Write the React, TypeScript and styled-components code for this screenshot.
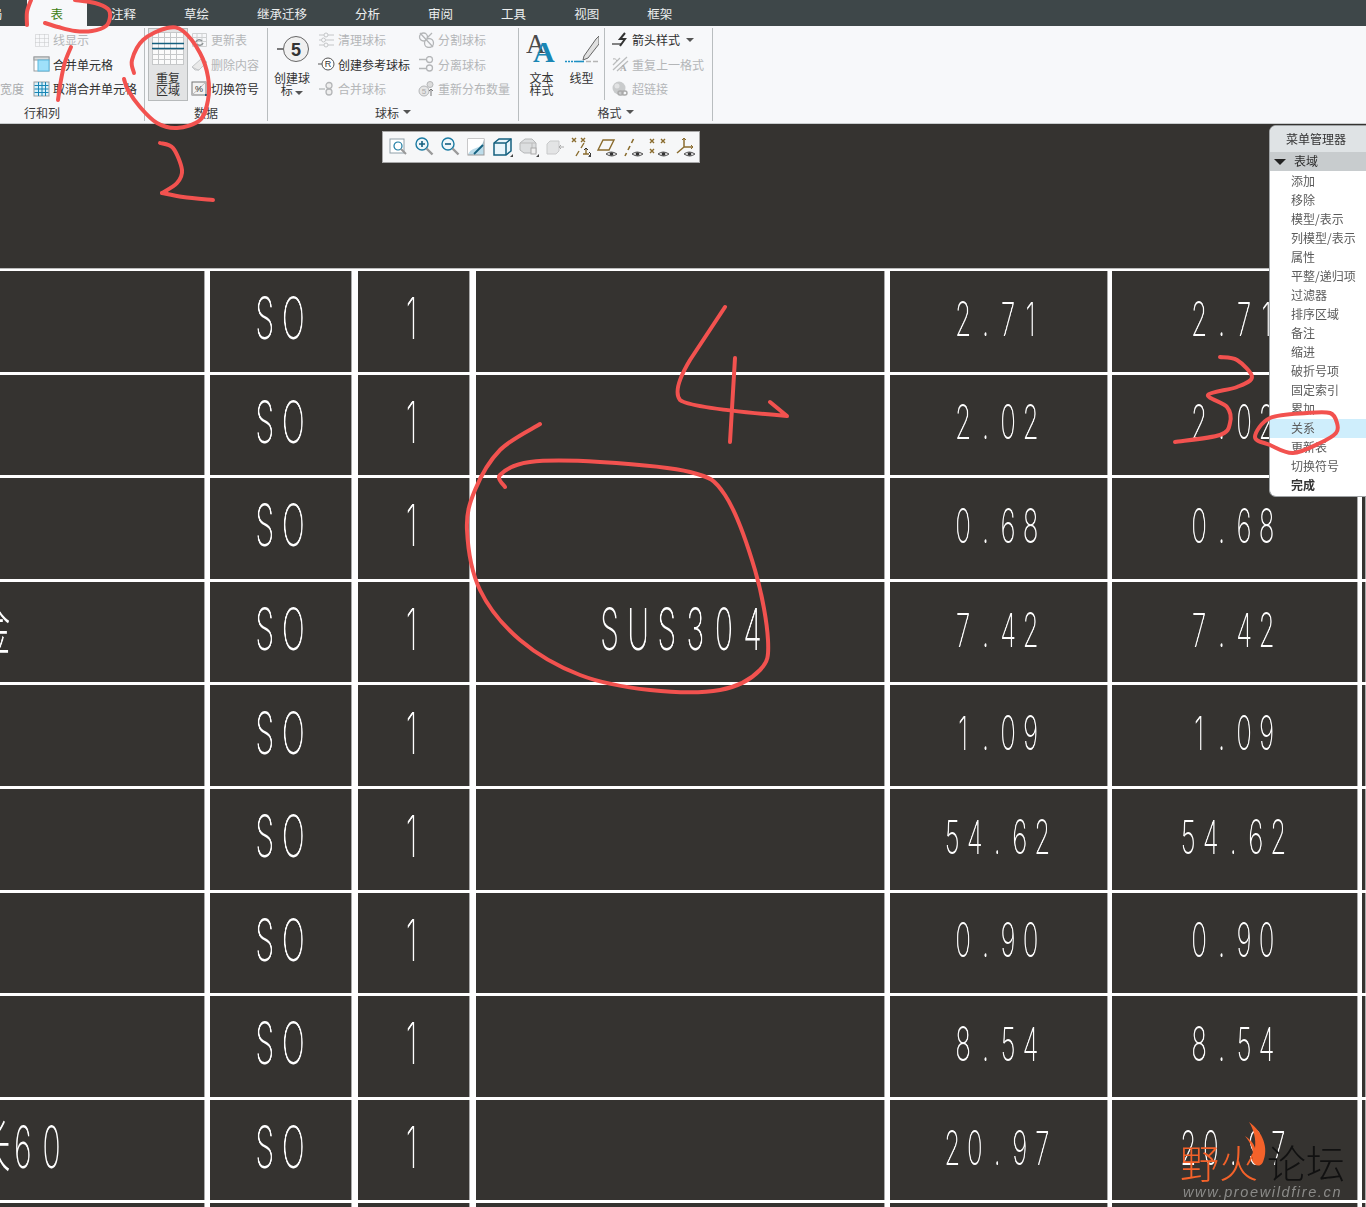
import React from "react";
import styled, { createGlobalStyle } from "styled-components";

const Global = createGlobalStyle`
  html, body { margin: 0; padding: 0; height: 1207px; overflow: hidden; background: #353330; }
  body { font-family: "Noto Sans CJK SC", "Liberation Sans", sans-serif; }
`;

const Page = styled.div`
  position: relative;
  width: 1366px;
  height: 1207px;
  overflow: hidden;
  background: #353330;
`;

/* ---------- tab bar ---------- */
const TabBar = styled.div`
  display: flex;
  height: 26px;
  background: #3e4749;
`;
const Tab = styled.div<{ $active?: boolean; $first?: boolean }>`
  padding: 0 24px;
  margin-left: ${(p) => (p.$first ? "-34px" : "0")};
  font-size: 12.5px;
  line-height: 28px;
  white-space: nowrap;
  color: ${(p) => (p.$active ? "#3c7d12" : "#eceeee")};
  background: ${(p) => (p.$active ? "#f7f8fa" : "transparent")};
`;

/* ---------- ribbon ---------- */
const Ribbon = styled.div`
  display: flex;
  height: 98px;
  padding-top: 1.5px;
  box-sizing: border-box;
  background: #f7f8fa;
  border-bottom: 1px solid #c9cccd;
`;
const Group = styled.div<{ $width: number }>`
  display: flex;
  flex-direction: column;
  width: ${(p) => p.$width}px;
  height: 93px;
  box-sizing: border-box;
  border-right: 1px solid #b9bdbf;
  flex: none;
`;
const GroupBody = styled.div<{ $pad: number }>`
  display: flex;
  height: 74px;
  padding-left: ${(p) => p.$pad}px;
`;
const GroupLabel = styled.div<{ $inset?: number }>`
  display: flex;
  justify-content: center;
  align-items: center;
  gap: 4px;
  padding-right: ${(p) => p.$inset ?? 0}px;
  padding-top: 3px;
  font-size: 12px;
  line-height: 15px;
  color: #3a3a3a;
`;
const Caret = styled.span`
  display: inline-block;
  width: 0;
  height: 0;
  border-left: 4px solid transparent;
  border-right: 4px solid transparent;
  border-top: 4px solid #555;
`;
const Column = styled.div<{ $left?: number }>`
  display: flex;
  flex-direction: column;
  margin-left: ${(p) => p.$left ?? 0}px;
`;
const RowItem = styled.div<{ $off?: boolean }>`
  display: flex;
  align-items: center;
  gap: 3px;
  height: 24.5px;
  font-size: 12px;
  white-space: nowrap;
  color: ${(p) => (p.$off ? "#b4b6b8" : "#2e2e2e")};
  svg { flex: none; }
`;
const ClippedLabel = styled.div`
  display: flex;
  align-items: center;
  height: 24.5px;
  margin-top: 49px;
  width: 33px;
  font-size: 12px;
  color: #a9abad;
`;
const LargeButton = styled.div<{ $width: number; $selected?: boolean; $left?: number }>`
  display: flex;
  flex-direction: column;
  align-items: center;
  box-sizing: border-box;
  width: ${(p) => p.$width}px;
  height: 73px;
  margin-left: ${(p) => p.$left ?? 0}px;
  font-size: 12px;
  line-height: 12px;
  text-align: center;
  color: #333;
  background: ${(p) => (p.$selected ? "#e2e3e4" : "transparent")};
  border: 1px solid ${(p) => (p.$selected ? "#b7babb" : "transparent")};
`;
const LargeIcon = styled.div`
  display: flex;
  align-items: center;
  justify-content: center;
  height: 40px;
  margin-bottom: 3px;
  flex: none;
`;
const InnerRule = styled.div`
  width: 1px;
  height: 72px;
  margin: 0 7px 0 4px;
  background: #b9bdbf;
`;

/* ---------- floating view toolbar ---------- */
const ViewToolbar = styled.div`
  position: absolute;
  left: 382px;
  top: 131px;
  display: flex;
  align-items: center;
  box-sizing: border-box;
  width: 318px;
  height: 32px;
  padding-left: 3px;
  background: #f6f7f8;
  border: 1px solid #a8a8a8;
`;
const ToolCell = styled.div`
  display: flex;
  justify-content: center;
  width: 26px;
  flex: none;
`;

/* ---------- table ---------- */
const Table = styled.div`
  display: grid;
  grid-template-columns: 210px 148px 118px 414px 222px 250px 1fr;
  grid-auto-rows: 100.6px;
  row-gap: 3px;
  margin-top: 144px;
  padding-top: 3px;
  background: #fff;
  box-shadow: inset 0 1px 0 #bbb;
`;
const Cell = styled.div<{ $line: number; $left?: boolean; $nudge?: number }>`
  display: flex;
  align-items: center;
  justify-content: ${(p) => (p.$left ? "flex-start" : "center")};
  min-width: 0;
  padding-bottom: 6px;
  padding-right: ${(p) => p.$nudge ?? 0}px;
  box-sizing: border-box;
  overflow: ${(p) => (p.$left ? "hidden" : "visible")};
  background: #353330;
  border-right: ${(p) => p.$line}px solid #fff;
  box-shadow: inset -1px 0 0 #a9a9a9;
`;
const CadLine = styled.span<{ $clip?: boolean; $size: number; $scale: number }>`
  display: inline-flex;
  flex: none;
  margin-left: ${(p) => (p.$clip ? "-20px" : "0")};
  font-family: Inter, "Noto Sans CJK SC", sans-serif;
  font-weight: 200;
  font-size: ${(p) => p.$size}px;
  line-height: ${(p) => p.$size}px;
  white-space: nowrap;
  color: #fff;
  will-change: transform;
  transform: scaleX(${(p) => p.$scale});
  transform-origin: ${(p) => (p.$clip ? "left center" : "center")};
`;
const Glyph = styled.span<{ $w: number }>`
  display: inline-block;
  flex: none;
  width: ${(p) => p.$w}px;
  text-align: center;
`;
const CadText = ({ text, small, clip }: { text: string; small?: boolean; clip?: boolean }) => {
  const size = small ? 47 : 58;
  const scale = small ? 0.55 : 0.52;
  const pitch = small ? 22.5 : 28.6;
  return (
    <CadLine $size={size} $scale={scale} $clip={clip}>
      {Array.from(text).map((c, i) => <Glyph key={i} $w={pitch / scale}>{c}</Glyph>)}
    </CadLine>
  );
};

/* ---------- menu manager ---------- */
const MenuPanel = styled.div`
  position: absolute;
  left: 1269px;
  top: 125px;
  width: 97px;
  height: 372px;
  box-sizing: border-box;
  overflow: hidden;
  background: #fff;
  border: 1px solid #9fa3a5;
  border-right: none;
  border-radius: 7px 0 0 7px;
`;
const MenuHeader = styled.div`
  height: 26px;
  padding-left: 16px;
  font-size: 12px;
  line-height: 25px;
  color: #333;
  background: #dfe3e5;
`;
const MenuSection = styled.div`
  display: flex;
  align-items: center;
  gap: 8px;
  box-sizing: border-box;
  height: 19px;
  margin-bottom: 1px;
  padding: 0 0 2px 4px;
  font-size: 12px;
  color: #2d2d2d;
  background: #c8ccce;
  &::before {
    content: "";
    width: 0;
    height: 0;
    margin-top: 2px;
    border-left: 6px solid transparent;
    border-right: 6px solid transparent;
    border-top: 6px solid #222;
  }
`;
const MenuItem = styled.div<{ $active?: boolean; $bold?: boolean }>`
  height: 19px;
  padding-left: 21px;
  font-size: 12px;
  line-height: 18px;
  white-space: nowrap;
  font-weight: ${(p) => (p.$bold ? 700 : 400)};
  color: ${(p) => (p.$bold ? "#333" : "#5a5a5a")};
  background: ${(p) => (p.$active ? "#cfeefc" : "transparent")};
`;

/* ---------- watermark & marker overlay ---------- */
const Watermark = styled.div`
  position: absolute;
  left: 1180px;
  top: 1138px;
  width: 180px;
`;
const WatermarkTitle = styled.div`
  display: flex;
  font-size: 39px;
  line-height: 46px;
  font-weight: 300;
  white-space: nowrap;
`;
const WarmChars = styled.span`
  color: #f4622a;
`;
const DarkChars = styled.span`
  margin-left: 9px;
  color: #111;
`;
const WatermarkUrl = styled.div`
  margin: 0 0 0 3px;
  font-family: "Liberation Sans", sans-serif;
  font-style: italic;
  font-size: 14.5px;
  line-height: 16px;
  letter-spacing: 1.63px;
  white-space: nowrap;
  color: #8b8b89;
`;
const Overlay = styled.svg`
  position: absolute;
  left: 0;
  top: 0;
  pointer-events: none;
`;

/* ---------- ribbon icons ---------- */
const OFF = "#c4c6c8";
const Grid16 = ({ c = OFF, dash }: { c?: string; dash?: boolean }) => (
  <svg width="17" height="16" viewBox="0 0 17 16" fill="none" stroke={c} strokeDasharray={dash ? "1 1" : undefined}>
    <path d="M2.5 2.5h13v12h-13zM2.5 6.5h13M2.5 10.5h13M6.5 2.5v12M11.5 2.5v12" />
  </svg>
);
const MergeIcon = () => (
  <svg width="17" height="16" viewBox="0 0 17 16">
    <rect x="1" y="1" width="15" height="14" fill="#fff" stroke="#9a9d9f" />
    <rect x="1" y="1" width="15" height="3" fill="#d9dcdd" stroke="#9a9d9f" />
    <rect x="5" y="4" width="11" height="11" fill="#9fe0fa" stroke="#5ab7de" />
  </svg>
);
const UnmergeIcon = () => (
  <svg width="17" height="16" viewBox="0 0 17 16" fill="none">
    <rect x="1" y="1" width="15" height="14" fill="#d8f2fc" stroke="#9a9d9f" />
    <path d="M1.5 4.5h14M5.5 1v14M9 1v14M12.5 1v14M1.5 8h14M1.5 11.5h14" stroke="#1986b5" />
  </svg>
);
const RepeatRegionIcon = () => (
  <svg width="32" height="33" viewBox="0 0 32 33" fill="none">
    <rect x="0" y="0" width="32" height="33" fill="#fbfbfb" />
    <path d="M0 .5h32M0 5.5h32M0 17.5h32M0 22.5h32M0 27.5h32M0 32.5h32M.5 0v33M6.5 0v33M12.5 0v33M18.5 0v33M24.5 0v33M31.5 0v33" stroke="#c6c8c9" />
    <path d="M0 11.5h32M0 16.5h32" stroke="#14607f" strokeWidth="1.3" />
  </svg>
);
const UpdateIcon = () => (
  <svg width="17" height="16" viewBox="0 0 17 16" fill="none">
    <path d="M1.5 1.5h14v13h-14zM1.5 5.5h14M1.5 9.5h14M6 1.5v13M11 1.5v13" stroke="#cfd1d2" />
    <path d="M5 10a3.5 3.5 0 0 1 6-1M12 11a3.5 3.5 0 0 1-6 1" stroke="#8f9496" strokeWidth="1.6" />
  </svg>
);
const EraserIcon = () => (
  <svg width="17" height="16" viewBox="0 0 17 16">
    <path d="M1 11 10 3l6 3-8 8H4z" fill="#e9e9e9" stroke={OFF} />
    <path d="M1 11l6 3 1 0" fill="none" stroke={OFF} />
  </svg>
);
const SwitchSymbolIcon = () => (
  <svg width="17" height="16" viewBox="0 0 17 16" fill="none">
    <rect x="1" y="1" width="14" height="13" stroke="#777" fill="#f3f3f3" />
    <path d="M1 14 15 1" stroke="#bbb" />
    <text x="4" y="11" fontSize="9" fontFamily="Liberation Sans" fill="#333">%</text>
    <rect x="14" y="13" width="2" height="2" fill="#14607f" />
  </svg>
);
const BalloonIcon = () => (
  <svg width="34" height="28" viewBox="0 0 34 28" fill="none">
    <path d="M2 14h6.5" stroke="#444" strokeWidth="1.4" />
    <circle cx="21" cy="14" r="12.5" fill="#f0f0f0" stroke="#666" />
    <text x="21" y="20.5" textAnchor="middle" fontFamily="Liberation Sans" fontWeight="700" fontSize="18" fill="#333">5</text>
  </svg>
);
const CleanIcon = () => (
  <svg width="17" height="16" viewBox="0 0 17 16" fill="none" stroke={OFF}>
    <path d="M1 3h5M10 3h6M1 8h2M8 8h8M1 13h5M10 13h6" />
    <circle cx="8" cy="3" r="2" />
    <circle cx="5.5" cy="8" r="2" />
    <circle cx="8" cy="13" r="2" />
  </svg>
);
const RefBalloonIcon = () => (
  <svg width="17" height="16" viewBox="0 0 17 16" fill="none">
    <path d="M0 8h4" stroke="#555" />
    <circle cx="10" cy="8" r="6" stroke="#555" fill="#fff" />
    <text x="10" y="11" textAnchor="middle" fontSize="9" fontFamily="Liberation Sans" fill="#333">R</text>
  </svg>
);
const MergeBalloonIcon = () => (
  <svg width="17" height="16" viewBox="0 0 17 16" fill="none" stroke="#b4b6b8" strokeWidth="1.3">
    <path d="M1 8h6" />
    <circle cx="11" cy="4.5" r="3" fill="#eee" />
    <circle cx="11" cy="11" r="3" fill="#eee" />
  </svg>
);
const SplitIcon = () => (
  <svg width="17" height="16" viewBox="0 0 17 16" fill="none" stroke="#b4b6b8" strokeWidth="1.3">
    <circle cx="5.5" cy="5" r="4" />
    <circle cx="11" cy="11" r="4.5" />
    <path d="M2 1l13 14M14 1L9 6" />
  </svg>
);
const DetachIcon = () => (
  <svg width="17" height="16" viewBox="0 0 17 16" fill="none" stroke="#b4b6b8" strokeWidth="1.3">
    <path d="M1 3.5h7M1 12.5h7" />
    <circle cx="11.5" cy="3.5" r="3" />
    <circle cx="11.5" cy="12" r="3" />
  </svg>
);
const RedistributeIcon = () => (
  <svg width="17" height="16" viewBox="0 0 17 16" fill="none" stroke="#b4b6b8">
    <circle cx="6" cy="10" r="5" fill="#e5e5e5" />
    <text x="6" y="13" textAnchor="middle" fontSize="8" stroke="none" fill="#aaa" fontFamily="Liberation Sans">5</text>
    <circle cx="12" cy="3.5" r="3" fill="#ddd" />
    <path d="M13 8v7M11 10l2-2 2 2" stroke="#777" />
  </svg>
);
const TextStyleIcon = () => (
  <svg width="32" height="34" viewBox="0 0 32 34">
    <text x="0" y="21" fontFamily="Liberation Serif" fontSize="27" fill="#4a4a4a">A</text>
    <text x="7" y="30" fontFamily="Liberation Serif" fontWeight="700" fontSize="30" fill="#1a86b4">A</text>
  </svg>
);
const LineStyleIcon = () => (
  <svg width="34" height="28" viewBox="0 0 34 28" fill="none">
    <path d="M19 21 31 4l3-3v8L23 23l-5 2z" fill="#e0e0e0" stroke="#666" />
    <path d="M0 26.5h11" stroke="#1d90c4" strokeWidth="1.6" strokeDasharray="2 1" />
    <path d="M11 26.5h8" stroke="#1d90c4" strokeWidth="1.6" />
    <path d="M21 26.5h13" stroke="#b5b5b5" strokeWidth="1.6" strokeDasharray="5 2" />
  </svg>
);
const ArrowStyleIcon = () => (
  <svg width="17" height="16" viewBox="0 0 17 16" fill="none">
    <path d="M0 12h9" stroke="#333" strokeWidth="1.2" />
    <path d="M13 1 8 7h5l-5 7" stroke="#333" strokeWidth="2" />
  </svg>
);
const RepeatFormatIcon = () => (
  <svg width="17" height="16" viewBox="0 0 17 16" fill="none">
    <path d="M1 14 15 1M5 15 16 5M1 9l7-7" stroke="#bbbdbe" strokeWidth="1.3" />
    <path d="M1 3a3 3 0 0 1 4 2" stroke="#b0b0b0" />
    <text x="8" y="15" fontSize="9" fontWeight="700" fontFamily="Liberation Serif" fill="#aaa">A</text>
  </svg>
);
const LinkIcon = () => (
  <svg width="17" height="16" viewBox="0 0 17 16" fill="none">
    <circle cx="7" cy="7" r="6.5" fill="#c9cbcc" />
    <circle cx="5" cy="5" r="2.5" fill="#e2e3e4" />
    <rect x="6" y="10" width="5" height="4" rx="2" stroke="#aaa" strokeWidth="1.4" />
    <rect x="10" y="10" width="5" height="4" rx="2" stroke="#aaa" strokeWidth="1.4" />
  </svg>
);

/* ---------- toolbar icons ---------- */
const BR = "#8a6c2e";
const Eye = () => (
  <g>
    <path d="M10 18q5-4 11 0q-5 4-11 0z" fill="#ddd" stroke="#555" />
    <circle cx="15.5" cy="18" r="1.8" fill="#333" />
  </g>
);
const T = ({ children }: { children: React.ReactNode }) => (
  <svg width="22" height="22" viewBox="0 0 22 22" fill="none">{children}</svg>
);
const Glass = ({ c = "#1b7ba3" }: { c?: string }) => (
  <g>
    <circle cx="8" cy="8" r="6" fill="#eef6fa" stroke={c} strokeWidth="1.4" />
    <path d="M12.5 12.5l6 6" stroke="#9a9a9a" strokeWidth="2.4" />
  </g>
);
const Corner = () => <path d="M21 18v3h-3z" fill="#444" />;
const toolIcons = [
  <T key="0"><rect x="2" y="3" width="14" height="14" fill="#fff" stroke="#8fa0a8" /><circle cx="10" cy="10" r="4" stroke="#1b7ba3" strokeWidth="1.2" /><path d="M13 13l5 5" stroke="#999" strokeWidth="2" /></T>,
  <T key="1"><Glass /><path d="M5 8h6M8 5v6" stroke="#145f80" strokeWidth="1.6" /></T>,
  <T key="2"><Glass /><path d="M5 8h6" stroke="#145f80" strokeWidth="1.6" /></T>,
  <T key="3"><rect x="2" y="3" width="16" height="16" fill="#bcdcea" stroke="#999" /><path d="M2 19V3h16q-1 7-8 9t-8 7z" fill="#fff" /><path d="M8 18 17 9" stroke="#14607f" strokeWidth="1.8" /></T>,
  <T key="4"><path d="M2 7l5-4h12v12l-5 4H2z" fill="#e9f5fb" stroke="#14607f" strokeWidth="1.5" /><path d="M2 7h12v12M14 7l5-4" stroke="#14607f" strokeWidth="1.5" /><Corner /></T>,
  <T key="5"><path d="M2 7l5-4h7l4 4v10H6l-4-3z" fill="#dcdedf" stroke="#b5b7b8" /><path d="M2 7h12l4 0M14 7v10" stroke="#bbb" /><rect x="13" y="12" width="5" height="6" fill="#eee" stroke="#aaa" /><Corner /></T>,
  <T key="6"><path d="M3 8l3-3h9v10l-3 3H3z" fill="#e3e4e5" stroke="#c8c9ca" /><path d="M15 11h5M17 9l-2 2 2 2" stroke="#aaa" /></T>,
  <T key="7"><path d="M2 2l4 4M6 2L2 6M11 2l4 4M15 2l-4 4M6 20l3-5M11 12l3-5M13 18h6M16 12v6" stroke={BR} strokeWidth="1.4" /><path d="M19 16l2 2-2 2M14 14l2-2 2 2" stroke="#333" /><Corner /></T>,
  <T key="8"><path d="M2 14l5-10h11l-5 10z" stroke={BR} strokeWidth="1.4" /><Eye /></T>,
  <T key="9"><path d="M3 20l1.5-3M6 14l2-4M9.5 7l2-4" stroke={BR} strokeWidth="1.6" /><Eye /></T>,
  <T key="10"><path d="M2 3l4 4M6 3L2 7M13 3l4 4M17 3l-4 4M2 13l4 4M6 13l-4 4" stroke={BR} strokeWidth="1.4" /><Eye /></T>,
  <T key="11"><path d="M10 11V2M10 11h9M10 11l-7 6" stroke={BR} strokeWidth="1.5" /><path d="M8 4l2-2 2 2M17 9l2 2-2 2" stroke={BR} /><Eye /></T>,
];

/* ---------- data ---------- */
const rows: { first?: string; mat?: string; v: string }[] = [
  { v: "2.71" },
  { v: "2.02" },
  { v: "0.68" },
  { first: "金", mat: "SUS304", v: "7.42" },
  { v: "1.09" },
  { v: "54.62" },
  { v: "0.90" },
  { v: "8.54" },
  { first: "长60", v: "20.97" },
  { v: "" },
];
const menu = ["添加", "移除", "模型/表示", "列模型/表示", "属性", "平整/递归项", "过滤器", "排序区域", "备注", "缩进", "破折号项", "固定索引", "累加", "关系", "更新表", "切换符号"];
const tabs = ["注释", "草绘", "继承迁移", "分析", "审阅", "工具", "视图", "框架"];

/* ---------- pen marks ---------- */
type P = [number, number];
const smooth = (p: P[], closed = false) => {
  const at = (i: number): P => (closed ? p[(i + p.length) % p.length] : p[Math.max(0, Math.min(p.length - 1, i))]);
  let d = `M${p[0][0]} ${p[0][1]}`;
  const n = closed ? p.length : p.length - 1;
  for (let i = 0; i < n; i++) {
    const [a, b, c, e] = [at(i - 1), at(i), at(i + 1), at(i + 2)];
    d += `C${b[0] + (c[0] - a[0]) / 6} ${b[1] + (c[1] - a[1]) / 6} ${c[0] - (e[0] - b[0]) / 6} ${c[1] - (e[1] - b[1]) / 6} ${c[0]} ${c[1]}`;
  }
  return d + (closed ? "Z" : "");
};
const marks: string[] = [
  smooth([[27, 25], [27, 12], [31, 0]]),
  smooth([[75, 0], [95, 3], [108, 9], [110, 17], [106, 26], [92, 31], [75, 31], [58, 27], [45, 23]]),
  smooth([[71, 47], [65, 62], [61, 80], [58, 100]]),
  smooth([[134, 73], [132, 60], [143, 40], [167, 28], [183, 31], [200, 53], [208, 77], [208, 100], [200, 120], [177, 128], [157, 123], [140, 107], [128, 90], [124, 79]]),
  smooth([[160, 143], [173, 148], [182, 170], [177, 183], [162, 193]]),
  smooth([[162, 193], [183, 197], [213, 200]]),
  smooth([[1220, 357], [1237, 360], [1252, 377], [1237, 387], [1208, 395], [1227, 407], [1230, 423], [1220, 435], [1175, 442]]),
  smooth([[1337, 423], [1330, 413], [1307, 413], [1270, 418], [1255, 437], [1270, 445], [1293, 453], [1320, 443], [1336, 433]], true),
  "M725 307L690 360Q672 390 680 400Q690 408 787 416L770 402",
  "M735 358L730 442",
  smooth([[540, 424], [500, 450], [475, 490], [467, 530], [480, 590], [520, 640], [580, 675], [650, 690], [720, 690], [760, 670], [768, 640], [755, 570], [725, 495], [690, 472], [600, 462], [530, 462], [500, 475], [505, 487]]),
];

export default function App() {
  return (
    <Page>
      <Global />
      <TabBar>
        <Tab $first>局</Tab>
        <Tab $active>表</Tab>
        {tabs.map((t) => <Tab key={t}>{t}</Tab>)}
      </TabBar>

      <Ribbon>
        <Group $width={145}>
          <GroupBody $pad={0}>
            <ClippedLabel>宽度</ClippedLabel>
            <Column>
              <RowItem $off><Grid16 dash />线显示</RowItem>
              <RowItem><MergeIcon />合并单元格</RowItem>
              <RowItem><UnmergeIcon />取消合并单元格</RowItem>
            </Column>
          </GroupBody>
          <GroupLabel $inset={60}>行和列</GroupLabel>
        </Group>

        <Group $width={123}>
          <GroupBody $pad={3}>
            <LargeButton $width={40} $selected>
              <LargeIcon><RepeatRegionIcon /></LargeIcon>
              <span>重复<br />区域</span>
            </LargeButton>
            <Column $left={3}>
              <RowItem $off><UpdateIcon />更新表</RowItem>
              <RowItem $off><EraserIcon />删除内容</RowItem>
              <RowItem><SwitchSymbolIcon />切换符号</RowItem>
            </Column>
          </GroupBody>
          <GroupLabel>数据</GroupLabel>
        </Group>

        <Group $width={251}>
          <GroupBody $pad={4}>
            <LargeButton $width={40}>
              <LargeIcon><BalloonIcon /></LargeIcon>
              <span>创建球<br />标 <Caret /></span>
            </LargeButton>
            <Column $left={6}>
              <RowItem $off><CleanIcon />清理球标</RowItem>
              <RowItem><RefBalloonIcon />创建参考球标</RowItem>
              <RowItem $off><MergeBalloonIcon />合并球标</RowItem>
            </Column>
            <Column $left={8}>
              <RowItem $off><SplitIcon />分割球标</RowItem>
              <RowItem $off><DetachIcon />分离球标</RowItem>
              <RowItem $off><RedistributeIcon />重新分布数量</RowItem>
            </Column>
          </GroupBody>
          <GroupLabel>球标<Caret /></GroupLabel>
        </Group>

        <Group $width={194}>
          <GroupBody $pad={4}>
            <LargeButton $width={37}>
              <LargeIcon><TextStyleIcon /></LargeIcon>
              <span>文本<br />样式</span>
            </LargeButton>
            <LargeButton $width={37} $left={3}>
              <LargeIcon><LineStyleIcon /></LargeIcon>
              <span>线型</span>
            </LargeButton>
            <InnerRule />
            <Column>
              <RowItem><ArrowStyleIcon />箭头样式&nbsp;<Caret /></RowItem>
              <RowItem $off><RepeatFormatIcon />重复上一格式</RowItem>
              <RowItem $off><LinkIcon />超链接</RowItem>
            </Column>
          </GroupBody>
          <GroupLabel>格式<Caret /></GroupLabel>
        </Group>
      </Ribbon>

      <Table>
        {rows.map((r, i) => (
          <React.Fragment key={i}>
            <Cell $line={5} $left>{r.first && <CadText clip text={r.first} />}</Cell>
            <Cell $line={6} $nudge={4}>{r.v && <CadText text="SO" />}</Cell>
            <Cell $line={6} $nudge={6}>{r.v && <CadText text="1" />}</Cell>
            <Cell $line={5}>{r.mat && <CadText text={r.mat} />}</Cell>
            <Cell $line={4} $nudge={4}><CadText small text={r.v} /></Cell>
            <Cell $line={4} $nudge={4}><CadText small text={r.v} /></Cell>
            <Cell $line={0} />
          </React.Fragment>
        ))}
      </Table>

      <ViewToolbar>
        {toolIcons.map((ic, i) => <ToolCell key={i}>{ic}</ToolCell>)}
      </ViewToolbar>

      <MenuPanel>
        <MenuHeader>菜单管理器</MenuHeader>
        <MenuSection>表域</MenuSection>
        {menu.map((m) => <MenuItem key={m} $active={m === "关系"}>{m}</MenuItem>)}
        <MenuItem $bold>完成</MenuItem>
      </MenuPanel>

      <Watermark>
        <WatermarkTitle>
          <WarmChars>野火</WarmChars>
          <DarkChars>论坛</DarkChars>
        </WatermarkTitle>
        <WatermarkUrl>www.proewildfire.cn</WatermarkUrl>
      </Watermark>

      <Overlay width="1366" height="1207" viewBox="0 0 1366 1207" fill="none">
        <path d="M1249 1122c14 10 20 26 14 40-3 6-9 4-11-2 2-8 1-14-7-24 6 4 9 8 10 12 1-9-1-18-6-26z" fill="#f4622a" />
        {marks.map((d, i) => (
          <path key={i} d={d} stroke="#f2524f" strokeWidth="4" strokeLinecap="round" strokeLinejoin="round" />
        ))}
      </Overlay>
    </Page>
  );
}
